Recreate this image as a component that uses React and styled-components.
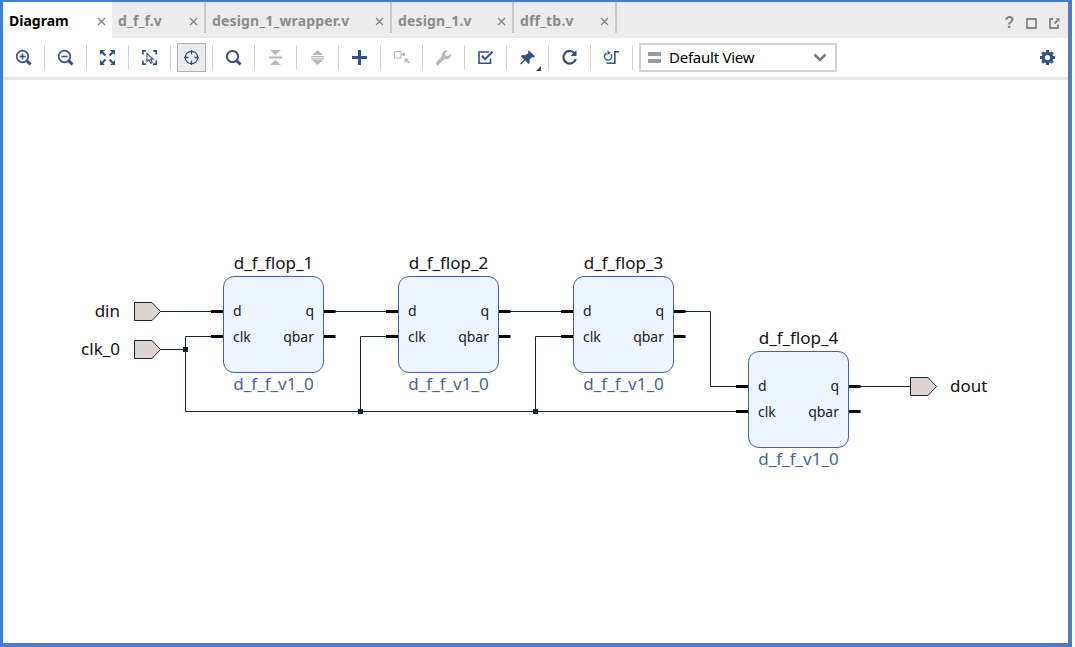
import React from 'react';
import styled, { createGlobalStyle } from 'styled-components';

const Global = createGlobalStyle`
  * { box-sizing: border-box; }
  body { margin: 0; background: #fff; font-family: "Noto Sans", "Open Sans", sans-serif; }
`;
const Frame = styled.div`
  width: 1072px; height: 647px; border: solid #487ccc; border-width: 2px 4px 4px 3px;
  background: #fff; display: flex; flex-direction: column; overflow: hidden;
`;
const TabBar = styled.div`
  height: 36px; flex: none; background: #ececec; display: flex; align-items: flex-start;
`;
const Tab = styled.div`
  width: ${p => p.$w}px; height: ${p => (p.$active ? 36 : 31)}px; flex: none;
  display: flex; align-items: flex-start; justify-content: space-between;
  padding: 9px 6px 0 6px;
  background: ${p => (p.$active ? '#fff' : '#ececec')};
  border-right: ${p => (p.$line ? '2px solid #c8c8c8' : '0')};
`;
const TabName = styled.span`
  font-size: 14px; line-height: 20px; font-weight: 700; white-space: nowrap;
  letter-spacing: ${p => (p.$active ? 0 : 0.17)}px;
  color: ${p => (p.$active ? '#000' : '#8b8b8b')};
`;
const Cross = styled.svg`width: 9px; height: 9px; margin-top: 6px; flex: none;`;
const WindowTools = styled.div`
  margin-left: auto; display: flex; gap: 11px; padding: 14px 8px 0 0; svg { display: block; }
`;
const Help = styled.span`
  width: 11px; height: 13px; font: 700 16px/14px "Liberation Sans", sans-serif; color: #858585; text-align: center;
`;
const Toolbar = styled.div`
  height: 42px; flex: none; display: flex; align-items: center; border-bottom: 3px solid #e6e6e6;
`;
const Slot = styled.div`
  width: 42px; height: 25px; flex: none; display: flex; align-items: center; justify-content: center;
  border-right: 1px solid #d4d4d4;
`;
const Button = styled.div`
  position: relative; width: 29px; height: 29px; flex: none; display: grid; place-items: center;
  border: 1px solid ${p => (p.$on ? '#b0b0b0' : 'transparent')};
  background: ${p => (p.$on ? '#ececec' : 'transparent')};
  svg { display: block; }
`;
const Corner = styled.span`
  position: absolute; right: 0; bottom: 0; width: 5px; height: 5px;
  background: #444; clip-path: polygon(100% 0, 100% 100%, 0 100%);
`;
const Select = styled.div`
  width: 198px; height: 29px; margin-left: 6px; border: 2px solid #d2d2d2; display: flex; align-items: center;
  padding: 0 8px 0 7px; font-size: 15px; letter-spacing: -0.25px; color: #000;
`;
const Bars = styled.span`
  width: 13px; height: 11px; border: solid #9a9a9a; border-width: 4px 0; margin-right: 8px;
`;
const SelectText = styled.span`flex: 1; line-height: 20px; padding-bottom: 2px;`;
const Settings = styled.div`margin: 0 13px 0 auto; svg { display: block; }`;
const Canvas = styled.div`position: relative; flex: 1;`;
const Wires = styled.svg`position: absolute; left: 0; top: 0; width: 1065px; height: 561px;`;
const Flop = styled.div`
  position: absolute; left: ${p => p.$x}px; top: ${p => p.$y}px; width: 101px; height: 97px;
  border: 1px solid #4463a4; border-radius: 11px; background: #edf5ff;
`;
const FlopName = styled.div`
  position: absolute; left: -20px; right: -20px; top: ${p => p.$top}px; text-align: center;
  font-size: 17px; line-height: 24px; color: ${p => p.$color};
`;
const Pins = styled.div`
  display: grid; grid-template-columns: auto auto; justify-content: space-between;
  padding: 21px 9px 0; font-size: 14px; line-height: 26px; color: #1c1c1c;
`;
const Pin = styled.span`text-align: ${p => (p.$out ? 'right' : 'left')};`;
const PortName = styled.div`
  position: absolute; top: ${p => p.$y}px; left: ${p => p.$x}px; width: 60px;
  text-align: ${p => p.$align}; font-size: 17px; line-height: 24px; color: #111;
`;

const navy = '#334f87';
const grey = '#b8b8b8';

const icons = {
  zoomIn: <svg width="17" height="17" fill="none" stroke={navy}><circle cx="7.5" cy="7.5" r="5.8" strokeWidth="1.7" /><path d="M11.5 11.5l4 4" strokeWidth="3" /><path d="M4.5 7.5h6M7.5 4.5v6" strokeWidth="1.6" /></svg>,
  zoomOut: <svg width="17" height="17" fill="none" stroke={navy}><circle cx="7.5" cy="7.5" r="5.8" strokeWidth="1.7" /><path d="M11.5 11.5l4 4" strokeWidth="3" /><path d="M4.5 7.5h6" strokeWidth="1.6" /></svg>,
  fit: (
    <svg width="17" height="17">
      <path d="M1 1h5L1 6zM16 1h-5l5 5zM1 16h5l-5-5zM16 16h-5l5-5z" fill={navy} />
      <path d="M3 3l3.500 3.500M14 3l-3.500 3.500M3 14l3.500-3.500M14 14l-3.500-3.500" stroke={navy} strokeWidth="2" />
    </svg>
  ),
  fitSel: (
    <svg width="17" height="17" fill="none" stroke={navy}>
      <path d="M1.800 5.500V1.800H5M12 1.800h3.200V5.500M1.800 11.500v3.700H5M12 15.200h3.200v-3.700" strokeWidth="1.700" />
      <path d="M6 4.500v8l2-1.800 1.700 3.500 1.600-.8-1.700-3.300h2.500z" strokeWidth="1.100" />
    </svg>
  ),
  target: <svg width="17" height="17" fill="none" stroke={navy}><circle cx="8.500" cy="8.500" r="6.200" strokeWidth="1.200" /><path d="M8.500 1v4.500M8.500 11.500V16M1 8.500h4.500M11.500 8.500H16" strokeWidth="1.300" /></svg>,
  search: <svg width="17" height="17" fill="none" stroke={navy}><circle cx="7.500" cy="7.500" r="5.600" strokeWidth="2" /><path d="M11.500 11.500l4 4" strokeWidth="3" /></svg>,
  collapse: <svg width="17" height="17" fill={grey}><path d="M3 1h11L8.500 6zM3 16h11L8.500 11zM2 7.500h13v2H2z" /></svg>,
  expand: <svg width="17" height="17" fill={grey}><path d="M3 6h11L8.500 1zM3 11h11l-5.500 5zM2 7h13v1.300H2zM2 9.200h13v1.300H2z" /></svg>,
  add: <svg width="17" height="17" stroke={navy} strokeWidth="3"><path d="M1 8.500h15M8.500 1v15" /></svg>,
  route: (
    <svg width="17" height="17" fill={grey}>
      <path d="M1.500 2.500h6.500v6.500h-6.500z" fill="none" stroke={grey} />
      <path d="M8 5h1.500V4h2.500v3H9.500V6H8zM11.500 9.500h4.500l-1.500 1.500 2 2v2l-3-2.800-2 1.800z" />
    </svg>
  ),
  wrench: <svg width="17" height="17"><path d="M2.700 14.300L9 8" stroke={grey} strokeWidth="3.500" strokeLinecap="round" /><path d="M12.500 1.500a4.500 4.500 0 1 0 3.300 3.300L13 7.300l-2.500-.600L10 4z" fill={grey} /></svg>,
  check: <svg width="17" height="17" fill="none" stroke={navy}><path d="M13.500 9.500v4.800H2V3H12" strokeWidth="1.600" /><path d="M4.800 6.800l3.300 3.300L15.500 2.800" strokeWidth="2" /></svg>,
  pin: <svg width="17" height="17" fill={navy}><path d="M10 1.500l6 6-1.300.9-1.500-.3-2.700 2.600.3 3-1.300 1.300-3.300-3.400L2 15.500l-.8-.8L5 10.500 1.800 7.300 3.100 6l3.200.2L9.300 4.300 9 2.500z" /></svg>,
  refresh: <svg width="17" height="17" fill="none" stroke={navy} strokeWidth="2.200"><path d="M14 4.800A6.300 6.300 0 1 0 14.800 10" /><path d="M15.500 1v6H9.500z" fill={navy} stroke="none" /></svg>,
  regen: (
    <svg width="17" height="17" fill="none" stroke={navy} strokeWidth="1.400">
      <path d="M3.600 4.200A3.600 3.600 0 1 0 7.800 5.200" />
      <path d="M3.500 14.200h8.300V2.700H16" strokeWidth="1.600" />
      <path d="M4.500 1.300v4.800l3.200-2.400z" fill={navy} stroke="none" />
    </svg>
  ),
};

const tabs = [
  { name: 'Diagram', w: 109, active: true },
  { name: 'd_f_f.v', w: 94, line: true },
  { name: 'design_1_wrapper.v', w: 186, line: true },
  { name: 'design_1.v', w: 122, line: true },
  { name: 'dff_tb.v', w: 103, line: true },
];
const flops = [[220, 196, 1], [395, 196, 2], [570, 196, 3], [745, 271, 4]];
const ink = '#10253a';

export default function App() {
  return (
    <><Global />
      <Frame>
        <TabBar>
          {tabs.map(t => (
            <Tab key={t.name} $w={t.w} $active={t.active} $line={t.line}>
              <TabName $active={t.active}>{t.name}</TabName>
              <Cross viewBox="0 0 9 9" stroke="#858585" strokeWidth="1.4"><path d="M1 1l7 7M8 1L1 8" /></Cross>
            </Tab>
          ))}
          <WindowTools>
            <Help>?</Help>
            <svg width="11" height="13" fill="none" stroke="#858585" strokeWidth="1.800"><path d="M1 3h9v9H1z" /></svg>
            <svg width="12" height="13" fill="none" stroke="#858585" strokeWidth="1.800"><path d="M5 3H2v9h8V8.500M6.500 7.500L9.500 4.500" /><path d="M7.500 2.200h4v4z" fill="#858585" stroke="none" /></svg>
          </WindowTools>
        </TabBar>
        <Toolbar>
          {Object.entries(icons).map(([name, icon]) => (
            <Slot key={name}><Button $on={name === 'target'}>{icon}{name === 'pin' && <Corner />}</Button></Slot>
          ))}
          <Select><Bars /><SelectText>Default View</SelectText>
            <svg width="14" height="9" fill="none" stroke="#7a7a7a" strokeWidth="2.500"><path d="M1.500 1.500L7 7l5.500-5.500" /></svg>
          </Select>
          <Settings>
            <svg width="15" height="15"><circle cx="7.500" cy="7.500" r="4.200" fill="none" stroke={navy} strokeWidth="3.200" /><path d="M7.500 0v3M7.500 12v3M0 7.500h3M12 7.500h3M2.200 2.200l2 2M10.800 10.800l2 2M12.800 2.200l-2 2M4.200 10.800l-2 2" stroke={navy} strokeWidth="3" /></svg>
          </Settings>
        </Toolbar>
        <Canvas>
          <Wires viewBox="3 80 1065 561" fill="none" stroke={ink}>
            <path d="M160 311.500h52M160 349.500h25.500M212 336.500h-26.500v75H737M335 311.500h52M510 311.500h52M387 336.500h-26.500v75M562 336.500h-26.500v75M685 311.500h25.500v75H737M860 386.500h50" />
            {[[134, 302], [134, 340], [910, 377]].map(([x, y]) => (
              <path key={`${x}-${y}`} d={`M${x + 0.5} ${y + 0.5}h17.500l8.500 9-8.500 9h-17.500z`} fill="#ddd4cf" />
            ))}
            <path d="M183 347h5v5h-5zM358 409h5v5h-5zM533 409h5v5h-5z" fill={ink} stroke="none" />
            {flops.map(([x, y, n]) => (
              <path key={n} stroke="#000" strokeWidth="3" d={`M${x - 9} ${y + 115.500}h12M${x - 9} ${y + 140.500}h12M${x + 104} ${y + 115.500}h11.500M${x + 104} ${y + 140.500}h11.500`} />
            ))}
          </Wires>
          {flops.map(([x, y, n]) => (
            <Flop key={n} $x={x} $y={y}>
              <FlopName $top={-26} $color="#111">d_f_flop_{n}</FlopName>
              <Pins><Pin>d</Pin><Pin $out>q</Pin><Pin>clk</Pin><Pin $out>qbar</Pin></Pins>
              <FlopName $top={95} $color="#4463a4">d_f_f_v1_0</FlopName>
            </Flop>
          ))}
          <PortName $x={57} $y={219} $align="right">din</PortName>
          <PortName $x={57} $y={257} $align="right">clk_0</PortName>
          <PortName $x={947} $y={294} $align="left">dout</PortName>
        </Canvas>
      </Frame>
    </>
  );
}
